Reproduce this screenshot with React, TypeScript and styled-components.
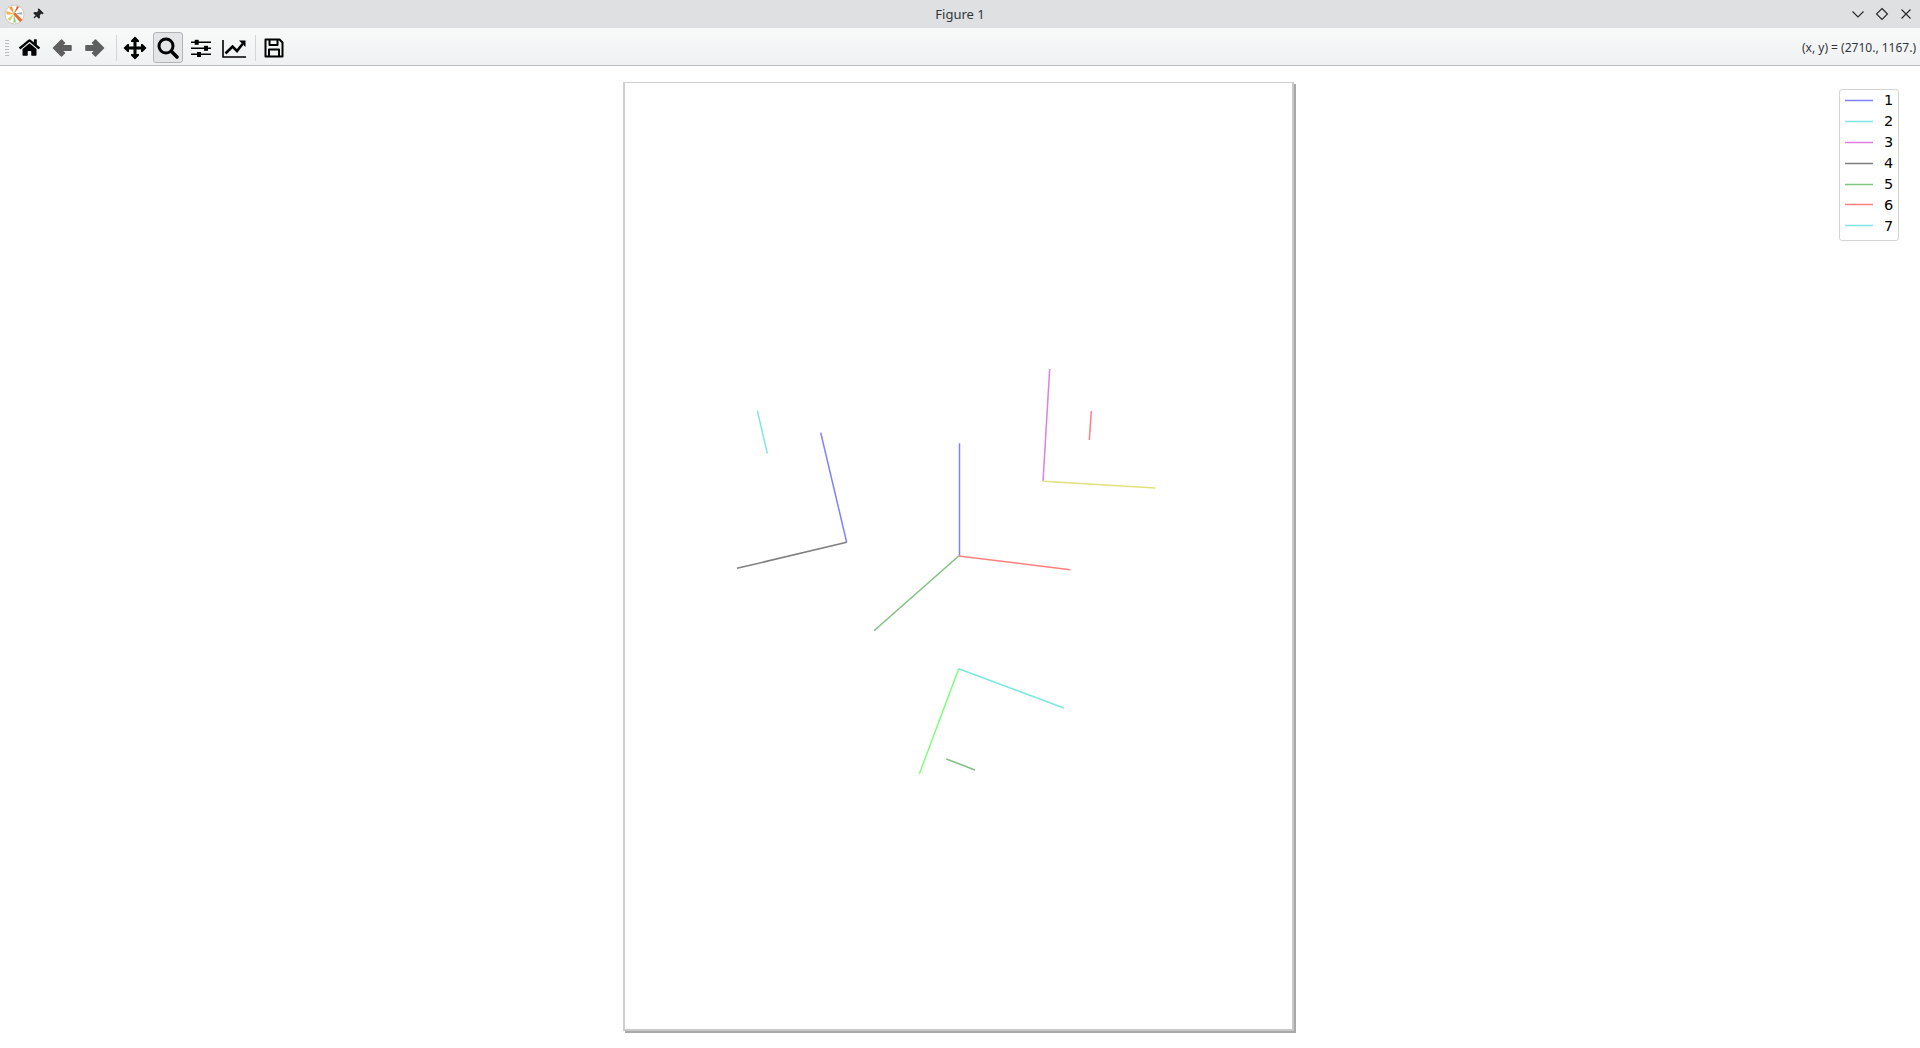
import { createGlobalStyle } from "styled-components";
import styled from "styled-components";
import { FaHome, FaThumbtack } from "react-icons/fa";

const GlobalStyle = createGlobalStyle`
  html, body {
    margin: 0;
    padding: 0;
    background: #ffffff;
  }
  body {
    font-family: "Noto Sans", "Liberation Sans", sans-serif;
    overflow: hidden;
  }
`;

const Window = styled.div`
  display: flex;
  flex-direction: column;
  width: 1920px;
  height: 1048px;
  overflow: hidden;
`;

const TitleBar = styled.div`
  position: relative;
  display: flex;
  align-items: center;
  justify-content: space-between;
  height: 28px;
  flex-shrink: 0;
  padding: 0 7px 0 4px;
  box-sizing: border-box;
  background: #dee0e2;
`;

const TitleLeft = styled.div`
  display: flex;
  align-items: center;
  gap: 7px;
`;

const PinIcon = styled(FaThumbtack)`
  width: 11px;
  height: 11px;
  color: #232629;
  transform: rotate(45deg);
`;

const Title = styled.div`
  position: absolute;
  left: 0;
  right: 0;
  text-align: center;
  font-size: 13px;
  color: #31363b;
  pointer-events: none;
`;

const WindowControls = styled.div`
  display: flex;
  align-items: center;
  gap: 10px;
`;

const ControlIcon = styled.svg`
  width: 14px;
  height: 14px;
  fill: none;
  stroke: #232629;
  stroke-width: 1.1;
`;

const Toolbar = styled.div`
  display: flex;
  align-items: center;
  justify-content: space-between;
  height: 38px;
  flex-shrink: 0;
  box-sizing: border-box;
  padding: 2px 4px 0 5px;
  background: linear-gradient(#f8f9f9, #f0f1f2);
  border-bottom: 1px solid #bcbdbe;
`;

const ToolGroup = styled.div`
  display: flex;
  align-items: center;
  gap: 3px;
`;

const Grip = styled.div`
  width: 4px;
  height: 18px;
  margin-right: 2px;
  background-image: radial-gradient(circle, #b9bbbd 0.7px, transparent 0.8px);
  background-size: 2px 3px;
`;

const ToolButton = styled.div<{ $active?: boolean }>`
  display: flex;
  align-items: center;
  justify-content: center;
  width: 30px;
  height: 31px;
  box-sizing: border-box;
  border-radius: 3px;
  border: 1px solid ${(p) => (p.$active ? "#b4b5b6" : "transparent")};
  background: ${(p) => (p.$active ? "#e4e5e6" : "transparent")};
`;

const ToolIcon = styled.svg<{ $muted?: boolean }>`
  display: block;
  width: 24px;
  height: 24px;
  flex-shrink: 0;
  color: ${(p) => (p.$muted ? "#5f5f5f" : "#000000")};
`;

const HomeIcon = styled(FaHome)`
  width: 21px;
  height: 21px;
  color: #000000;
`;

const ToolSeparator = styled.div`
  width: 1px;
  height: 26px;
  margin-left: 3px;
  background: #d3d5d6;
`;

const Coordinates = styled.div`
  font-size: 12px;
  color: #31363b;
  white-space: nowrap;
`;

const CanvasArea = styled.div`
  position: relative;
  flex: 1;
  display: flex;
  justify-content: center;
  align-items: flex-start;
  padding: 16px 3px 0 0;
  background: #ffffff;
`;

const FigurePage = styled.div`
  width: 671px;
  height: 949px;
  flex-shrink: 0;
  box-sizing: border-box;
  background: #ffffff;
  border-left: 2px solid #cfcfcf;
  border-top: 1px solid #cfcfcf;
  border-right: 2px solid #c8c8c8;
  border-bottom: 2px solid #c8c8c8;
  box-shadow: 2px 2px 0 #a8a8a8;
`;

const PlotSvg = styled.svg`
  display: block;
  width: 100%;
  height: 100%;
  stroke-width: 1.5;
  fill: none;
`;

const Legend = styled.div`
  position: absolute;
  top: 23px;
  right: 21px;
  width: 60px;
  height: 152px;
  box-sizing: border-box;
  background: #ffffff;
  border: 1px solid #d4d4d4;
  border-radius: 3px;
`;

const LegendRow = styled.div`
  display: flex;
  align-items: center;
  height: 20.9px;
  padding-left: 5px;
`;

const LegendSwatch = styled.svg`
  display: block;
  width: 28px;
  height: 3px;
  stroke-width: 1.5;
`;

const LegendLabel = styled.span`
  margin-left: 11px;
  font-family: "DejaVu Sans", sans-serif;
  font-size: 14.5px;
  color: #000000;
`;

const legendItems = [
  { label: "1", color: "#7f7fff" },
  { label: "2", color: "#7fe6e6" },
  { label: "3", color: "#e07fe0" },
  { label: "4", color: "#7f7f7f" },
  { label: "5", color: "#7fc77f" },
  { label: "6", color: "#ff7f7f" },
  { label: "7", color: "#7fe6e6" },
];

// paths are in window pixels, the viewBox below starts at the page corner
const segments = [
  { color: "#7fe6e0", d: "M757.3 410.7L767.3 453.3" },
  { color: "#7f7fff", d: "M820.7 432.7L846.7 542.3" },
  { color: "#7f7f7f", d: "M846.7 542.3L737 568.3" },
  { color: "#7f7fff", d: "M959.5 443.3L959.5 556" },
  { color: "#ff7f7f", d: "M958.7 556L1070.3 569.7" },
  { color: "#7fc07f", d: "M958.7 556L874 630.7" },
  { color: "#e07fe0", d: "M1049.7 369L1043 481.3" },
  { color: "#e3e07f", d: "M1043 481.3L1155.3 488" },
  { color: "#ff7f7f", d: "M1091.3 411L1089.3 440" },
  { color: "#7fff7f", d: "M958.7 668.7L919.3 774" },
  { color: "#7fe6e6", d: "M958.7 668.7L1064 708" },
  { color: "#7fc07f", d: "M946.3 759L975 770" },
];

const AppLogo = () => (
  <svg width="21" height="21" viewBox="0 0 21 21">
    <circle cx="10.5" cy="10.5" r="9.5" fill="#fbfaf6" stroke="#cfcabf" strokeWidth="1" />
    <path d="M10 10L2.5 7L2.5 10.5Z" fill="#f4b13e" />
    <path d="M10 10L5 3.5L8 2.5Z" fill="#ef9a2e" />
    <path d="M10 10L13 2L15 3Z" fill="#e8553a" />
    <path d="M10 10L18 8L18.5 10.5Z" fill="#8fb4c8" />
    <path d="M9 10L11 8.5L18.5 16L16 18Z" fill="#ea6a2c" />
    <path d="M10 10L12 18.5L9.5 18.5Z" fill="#8fcf6a" />
    <path d="M10 10L6 17L3.5 15Z" fill="#c4d46a" />
  </svg>
);

const BackIcon = () => (
  <ToolIcon $muted viewBox="0 0 24 24" fill="currentColor" stroke="currentColor" strokeWidth="1.5" strokeLinejoin="round">
    <path d="M3.5 12L11.5 4L14.5 7L11.3 9.8H21V14.2H11.3L14.5 17L11.5 20Z" />
  </ToolIcon>
);

const ForwardIcon = () => (
  <ToolIcon $muted viewBox="0 0 24 24" fill="currentColor" stroke="currentColor" strokeWidth="1.5" strokeLinejoin="round">
    <path d="M20.5 12L12.5 4L9.5 7L12.7 9.8H3V14.2H12.7L9.5 17L12.5 20Z" />
  </ToolIcon>
);

const MoveIcon = () => (
  <ToolIcon viewBox="0 0 24 24" fill="currentColor">
    <path d="M12 .5L16 4.5V6H13.5V10.5H18V8H19.5L23.5 12L19.5 16H18V13.5H13.5V18H16V19.5L12 23.5L8 19.5V18H10.5V13.5H6V16H4.5L.5 12L4.5 8H6V10.5H10.5V6H8V4.5Z" />
  </ToolIcon>
);

const ZoomIcon = () => (
  <ToolIcon viewBox="0 0 24 24" fill="none" stroke="currentColor">
    <circle cx="10" cy="10" r="7" strokeWidth="3" />
    <path d="M15.5 15.5L21 21" strokeWidth="3.6" strokeLinecap="round" />
  </ToolIcon>
);

const SlidersIcon = () => (
  <ToolIcon viewBox="0 0 24 24" fill="currentColor">
    <path d="M2 5.5H22V7H2ZM2 11.5H22V13H2ZM2 17.5H22V19H2Z" />
    <rect x="5.7" y="3.8" width="4" height="5" />
    <rect x="15" y="9.8" width="4" height="5" />
    <rect x="8" y="16" width="4" height="5" />
  </ToolIcon>
);

const ChartIcon = () => (
  <ToolIcon viewBox="0 0 24 24" fill="none" stroke="currentColor">
    <path d="M1 4V21H24" strokeWidth="1.6" />
    <path d="M3.5 17.5L10.5 10.5L15 15L20.5 8" strokeWidth="2.6" />
    <path d="M17 4.5H23.5V11Z" fill="currentColor" stroke="none" />
  </ToolIcon>
);

const SaveIcon = () => (
  <ToolIcon viewBox="0 0 24 24" fill="none" stroke="currentColor" strokeWidth="2" strokeLinejoin="round">
    <path d="M3.5 3.5H17.5L20.5 6.5V20.5H3.5Z" />
    <path d="M7.5 3.5V9H15.5V3.5" />
    <path d="M7 20.5V13.5H17V20.5" />
  </ToolIcon>
);

const App = () => {
  return (
    <Window>
      <GlobalStyle />
      <TitleBar>
        <TitleLeft>
          <AppLogo />
          <PinIcon />
        </TitleLeft>
        <Title>Figure 1</Title>
        <WindowControls>
          <ControlIcon viewBox="0 0 14 14">
            <path d="M1.5 4.5L7 10L12.5 4.5" />
          </ControlIcon>
          <ControlIcon viewBox="0 0 14 14">
            <path d="M7 1.5L12.5 7L7 12.5L1.5 7Z" />
          </ControlIcon>
          <ControlIcon viewBox="0 0 14 14">
            <path d="M2.5 2.5L11.5 11.5M11.5 2.5L2.5 11.5" />
          </ControlIcon>
        </WindowControls>
      </TitleBar>
      <Toolbar>
        <ToolGroup>
          <Grip />
          <ToolButton><HomeIcon /></ToolButton>
          <ToolButton><BackIcon /></ToolButton>
          <ToolButton><ForwardIcon /></ToolButton>
          <ToolSeparator />
          <ToolButton><MoveIcon /></ToolButton>
          <ToolButton $active><ZoomIcon /></ToolButton>
          <ToolButton><SlidersIcon /></ToolButton>
          <ToolButton><ChartIcon /></ToolButton>
          <ToolSeparator />
          <ToolButton><SaveIcon /></ToolButton>
        </ToolGroup>
        <Coordinates>(x, y) = (2710., 1167.)</Coordinates>
      </Toolbar>
      <CanvasArea>
        <FigurePage>
          <PlotSvg viewBox="625 83 667 946" preserveAspectRatio="none">
            {segments.map((segment) => (
              <path key={segment.d} d={segment.d} stroke={segment.color} />
            ))}
          </PlotSvg>
        </FigurePage>
        <Legend>
          {legendItems.map((item) => (
            <LegendRow key={item.label}>
              <LegendSwatch viewBox="0 0 28 3">
                <path d="M0 1.5H28" stroke={item.color} />
              </LegendSwatch>
              <LegendLabel>{item.label}</LegendLabel>
            </LegendRow>
          ))}
        </Legend>
      </CanvasArea>
    </Window>
  );
};

export default App;
